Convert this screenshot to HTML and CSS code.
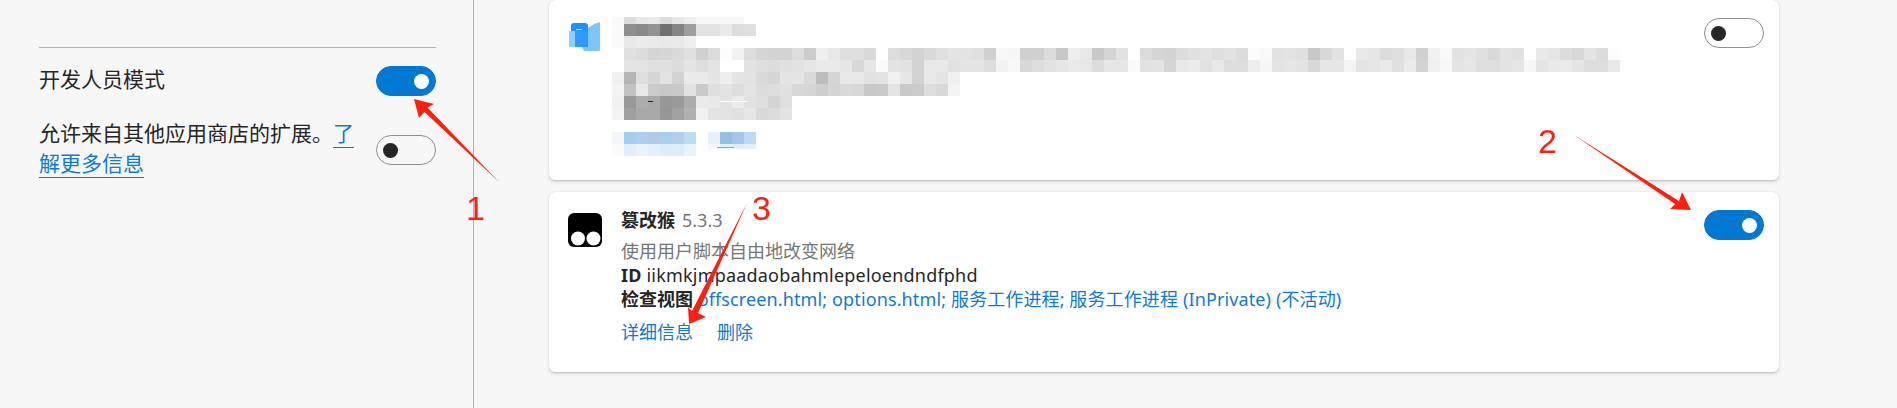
FILE: index.html
```html
<!DOCTYPE html>
<html lang="zh-CN">
<head>
  <meta charset="UTF-8">
  <title>扩展</title>
  <link rel="stylesheet" href="styles.css">
</head>
<body>
  <div class="page">
    <aside class="sidebar">
      <div class="setting setting-dev">
        <span class="setting-label">开发人员模式</span>
        <span class="toggle on"></span>
      </div>
      <div class="setting setting-stores">
        <span class="setting-label">允许来自其他应用商店的扩展。<a href="#">了</a><br><a href="#">解更多信息</a></span>
        <span class="toggle"></span>
      </div>
    </aside>

    <main class="cards">
      <section class="card card-hidden">
        <svg class="ext-icon folder-icon" width="34" height="34" viewBox="0 0 34 34">
          <path fill="#1e90ff" d="M3 5q0-3 3-3h11q3 0 3 3v6H3z"/>
          <path fill="#94ccff" d="M1 10h7v16H1z"/>
          <path fill="#2b9bff" d="M7 9h13v17H7z"/>
          <path fill="#80c4ff" d="M20 7l6-4 6-2v25H20z"/>
          <path fill="#80c4ff" d="M14 26h18v3q0 1-2 1H16z"/>
          <path fill="#d6ecff" d="M8 8h6v1H8z"/>
        </svg>
        <canvas class="mosaic" id="mosaic" width="1008" height="144"></canvas>
        <span class="toggle"></span>
      </section>

      <section class="card">
        <svg class="ext-icon" width="34" height="34" viewBox="0 0 34 34">
          <rect width="34" height="34" rx="6" fill="#000"/>
          <circle cx="10" cy="25.5" r="7" fill="#fff"/>
          <circle cx="25.5" cy="25.5" r="7" fill="#fff"/>
        </svg>
        <div class="ext-body">
          <div class="ext-title"><strong>篡改猴</strong><span class="ext-version">5.3.3</span></div>
          <div class="ext-desc">使用用户脚本自由地改变网络</div>
          <div class="ext-id"><strong>ID</strong> iikmkjmpaadaobahmlepeloendndfphd</div>
          <div class="ext-views"><strong>检查视图</strong> <a href="#">offscreen.html; options.html; 服务工作进程; 服务工作进程 (InPrivate) (不活动)</a></div>
          <div class="ext-links"><a href="#">详细信息</a><a href="#">删除</a></div>
        </div>
        <span class="toggle on"></span>
      </section>
    </main>
  </div>

  <!-- 红色标注 -->
  <svg class="notes" width="1897" height="408" viewBox="0 0 1897 408">
    <polygon points="414,99 434,104 427.5,107.5 499,182 424.5,112 419,118"/>
    <polygon points="1691,210 1682,192 1679,201 1574,135 1675,204 1670,209"/>
    <polygon points="689,324 706,317 698,313 747,203 692,311 688,307"/>
    <text x="466" y="220">1</text>
    <text x="1538" y="153">2</text>
    <text x="752" y="220">3</text>
  </svg>

  <script src="mosaic.js"></script>
</body>
</html>
```

FILE: styles.css
```css
* {
  box-sizing: border-box;
}

html, body {
  margin: 0;
  height: 100%;
  overflow: hidden;
}

body {
  background: #f7f7f7;
  color: #262626;
  font-family: "Noto Sans", "Noto Sans CJK SC", sans-serif;
  font-size: 18px;
  line-height: 24px;
}

a {
  color: #0f7bd0;
  text-decoration: none;
}

.page {
  display: flex;
  height: 408px;
}

/* 左侧设置栏 */
.sidebar {
  width: 474px;
  flex: none;
  padding: 47px 37px 0 39px;
  border-right: 1px solid #b3b3b3;
}

.setting {
  display: flex;
  align-items: flex-start;
  justify-content: space-between;
  font-size: 21px;
  line-height: 30px;
}

.setting-dev {
  border-top: 1px solid #b3b3b3;
  padding-top: 18px;
}

.setting-dev .setting-label {
  margin-top: -2px;
}

.setting-stores {
  margin-top: 22px;
}

.setting-stores .setting-label {
  width: 320px;
}

.setting-stores .toggle {
  margin-top: 17px;
}

.setting-label a {
  border-bottom: 1.5px solid #0f7bd0;
}

.toggle {
  position: relative;
  flex: none;
  width: 60px;
  height: 30px;
  border: 1px solid #8f8f8f;
  border-radius: 15px;
  background: transparent;
}

.toggle::after {
  content: "";
  position: absolute;
  top: 7px;
  left: 6px;
  width: 15px;
  height: 15px;
  border-radius: 50%;
  background: #262626;
}

.toggle.on {
  border-color: #0078d4;
  background: #0078d4;
}

.toggle.on::after {
  left: 37px;
  background: #fff;
}

/* 扩展卡片 */
.cards {
  display: flex;
  flex-direction: column;
  gap: 12px;
  width: 1230px;
  margin-left: 75px;
}

.card {
  display: flex;
  align-items: flex-start;
  height: 180px;
  padding: 17px 15px 0 19px;
  border-radius: 6px;
  background: #fff;
  box-shadow: 0 1.6px 3.6px rgba(0, 0, 0, 0.13), 0 0.3px 0.9px rgba(0, 0, 0, 0.11);
}

.card-hidden {
  padding-top: 12px;
}

.card > .toggle {
  margin-top: 1px;
  margin-left: auto;
}

.card-hidden > .toggle {
  margin-top: 6px;
}

.ext-icon {
  flex: none;
  margin-top: 4px;
  margin-right: 19px;
}

.folder-icon {
  margin-top: 9px;
}

.mosaic {
  display: block;
  margin-left: -9px;
}

.ext-body {
  margin-top: -1px;
}

.ext-title strong {
  margin-right: 7px;
}

.ext-version,
.ext-desc {
  color: #767676;
}

.ext-desc {
  margin-top: 7px;
}

.ext-id {
  letter-spacing: 0.2px;
}

.ext-views a {
  letter-spacing: 0.12px;
}

.ext-links {
  display: flex;
  gap: 24px;
  margin-top: 9px;
}

/* 标注层 */
.notes {
  position: absolute;
  top: 0;
  left: 0;
  pointer-events: none;
}

.notes polygon {
  fill: #ff1f0f;
}

.notes text {
  fill: #ff1f0f;
  font-family: "Liberation Sans", sans-serif;
  font-size: 34px;
}
```

FILE: mosaic.js
```js
// 打码区域：[y, 高度, 起始列, 色块]，两位是灰度，六位是颜色
const rows = [
  [5, 7, 0, 'fa dd e8 ea dc e8 f0 f8 f8 f8 f8'],
  [12, 12, 0, 'fa 8f 8a 93 6f 84 9e e3 e3 ea dd e0'],
  [24, 12, 0, 'fa e9 ec ea e8 ea ef'],
  [36, 12, 1, 'e0 dc d5 d6 da e0 d0 dc fc f2 dd d6 d3 d3 dd cc ef e8 de de d9 ff dd d8 d3 da e0 e5 e3 e0 d0 f8 f7 d0 d0 dc c8 ee e8 c8 d5 e2 ff dc d5 d3 dc e0 e3 df e2 dc fc f9 e2 e3 e0 c8 d8 e2 ff e8 e6 dc de e8 d0 f1 f9 e2 e5 e0 d9 e3 e0 ff e9 e6 dc d8 e4 dc fd'],
  [48, 12, 1, 'e4 e4 e0 e0 dc e5 de e4 ff ff e2 df dc e0 e2 e6 ea ea e6 d8 e6 fa e3 e2 d3 e8 e9 e2 e5 e5 dd f2 f8 d8 dd e2 e6 ea e7 dc e6 e6 fa e2 e3 d5 e8 eb e2 e8 dd dd ee f7 e4 e6 e3 d8 e6 e6 f5 e4 e6 ea e0 eb d3 f0 f8 e4 e6 de de e3 e6 f7 e5 e9 eb e5 dd dd e8'],
  [60, 12, 0, 'f1 b5 de d6 e3 d2 ea ea e5 ee e5 e3 d9 d6 e4 e5 da bd d5 e8 e8 e2 e3 f0 e6 d2 e8 e4 f0'],
  [72, 12, 0, 'f4 c3 e8 cb c8 c9 e2 ca df e3 dd e4 dc dd e1 d8 d6 ce d4 da d8 c8 ca e4 c9 cb dd d8 f3'],
  [84, 12, 0, 'f1 99 ac a9 98 9a ac ea e9 e3 eb e2 df d4 e0'],
  [96, 12, 0, 'f3 9f a9 a9 96 a2 b0 f0 e4 e3 e1 e6 da dc e3'],
  [120, 12, 0, 'f3f6fc a5cdf0 abcff0 b0cbea a5d0f0 b0d0ee bfddf2 ffffff e8f1fb 92c0e8 a4c6ea bcdaf0'],
  [132, 12, 0, 'fafbfe e0eefa eaf2fa e5eefa dfecf8 e0ecf8 e9f3fb'],
  [132, 5, 8, 'f4f8fd e4f0fa dfecf8 e4f0f8']
];

const ctx = document.getElementById('mosaic').getContext('2d');

rows.forEach(([y, h, start, cells]) => {
  cells.split(' ').forEach((c, i) => {
    ctx.fillStyle = '#' + (c.length === 2 ? c + c + c : c);
    ctx.fillRect((start + i) * 12, y, 12, h);
  });
});

// 色块里残留的几个像素
ctx.fillStyle = '#222';
ctx.fillRect(36, 89, 5, 1);
ctx.fillStyle = '#fff';
ctx.fillRect(108, 89, 27, 1);
ctx.fillStyle = '#6db0ea';
ctx.fillRect(105, 135, 17, 1);
```
